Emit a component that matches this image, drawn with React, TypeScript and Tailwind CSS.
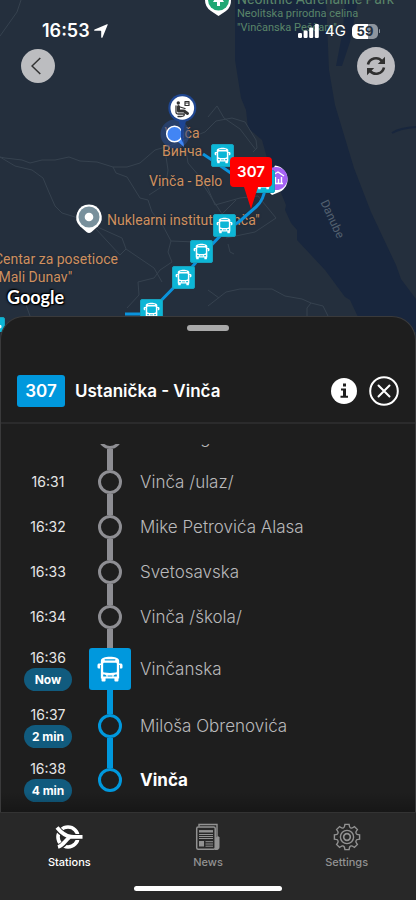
import React from "react";

/* ── Types ────────────────────────────────────────────────────────────────── */
type StopState = "passed" | "current" | "upcoming";
type Stop = { time: string; name: string; state: StopState; eta?: string; last?: boolean };
type Point = { x: number; y: number };

/* ── Data ─────────────────────────────────────────────────────────────────── */
const STOPS: Stop[] = [
  { time: "", name: "Beli Breg", state: "passed" },
  { time: "16:31", name: "Vinča /ulaz/", state: "passed" },
  { time: "16:32", name: "Mike Petrovića Alasa", state: "passed" },
  { time: "16:33", name: "Svetosavska", state: "passed" },
  { time: "16:34", name: "Vinča /škola/", state: "passed" },
  { time: "16:36", name: "Vinčanska", state: "current", eta: "Now" },
  { time: "16:37", name: "Miloša Obrenovića", state: "upcoming", eta: "2 min" },
  { time: "16:38", name: "Vinča", state: "upcoming", eta: "4 min", last: true },
];

const BUS_STOPS: Point[] = [
  { x: 211, y: 144 },
  { x: 252, y: 170 },
  { x: 213, y: 214 },
  { x: 190, y: 240 },
  { x: 172, y: 266 },
  { x: 140, y: 299 },
  { x: -18, y: 317 },
];

/* ── Icons ────────────────────────────────────────────────────────────────── */
function BusShape() {
  return (
    <>
      <path
        fillRule="evenodd"
        d="M4.500 5C4.500 2.300 9 .8 14 .8S23.500 2.300 23.500 5V23.400h-.7V25.500a1 1 0 0 1-1 1h-2.200a1 1 0 0 1-1-1v-2.100h-9.200v2.100a1 1 0 0 1-1 1H6.200a1 1 0 0 1-1-1v-2.100h-.7ZM9 3.300a.7.7 0 0 0 0 1.400h10a.7.7 0 0 0 0-1.400ZM8.200 7C7.400 7 6.900 7.500 6.900 8.300v7.500c0 .8.500 1.300 1.300 1.400 3.800.6 7.800.6 11.600 0 .8-.1 1.300-.6 1.300-1.400V8.300c0-.8-.5-1.300-1.300-1.300ZM6.900 19.200v2h3.500c0-1.300-1.300-2-3.500-2Zm14.200 0c-2.200 0-3.500.7-3.500 2h3.500ZM11.500 20.200v1h5v-1Z"
      />
      <path d="M5 7.800v1.600H3.700V13H2.300A1.300 1.300 0 0 1 1 11.700V9.600C1 8.500 1.800 7.800 2.900 7.800ZM23 7.800v1.600h1.300V13h1.400a1.300 1.300 0 0 0 1.300-1.300V9.600c0-1.100-.8-1.800-1.900-1.800Z" />
    </>
  );
}

function BusIcon({ className }: { className?: string }) {
  return (
    <svg viewBox="0 0 28 27" fill="currentColor" className={className} aria-hidden="true">
      <BusShape />
    </svg>
  );
}

function StationsIcon() {
  return (
    <svg viewBox="0 0 28 26" className="h-[26px] w-7" fill="none" stroke="currentColor" aria-hidden="true">
      <circle cx="13" cy="13" r="10" strokeWidth="3.600" />
      <path d="M1.500 3.500C6 9 10 12 16 12.800c4 .4 7 .2 11.500.2M2.500 23.500C8 22 10 18 15.500 13" stroke="#282828" strokeWidth="6" />
      <path d="M2 3.500C6 8.500 10 12 16 12.600c4 .4 7 .2 11.500.2M3 23C8.500 21.500 9.500 17 15 12.800" strokeWidth="3.800" />
    </svg>
  );
}

function NewsIcon() {
  return (
    <svg viewBox="0 0 26 28" className="h-7 w-[26px]" fill="none" stroke="currentColor" aria-hidden="true">
      <path d="M4 3.500V1.500h18v22" strokeWidth="1.400" />
      <path d="M22 14h2v10.500a2 2 0 0 1-2 2h-2V15" fill="currentColor" strokeWidth="1" />
      <rect x="1.700" y="4" width="18.500" height="22.300" rx="1.500" fill="#282828" strokeWidth="1.500" />
      <path d="M4 8.300h14" strokeWidth="2.400" />
      <path d="M4 11.500h14M4 13.500h14M4 15.500h14M10.500 18.700h7.500M10.500 21h7.500M10.500 23.200h7.500" strokeWidth="1" />
      <path d="M4 18h5v5.500H4Z" fill="currentColor" stroke="none" />
    </svg>
  );
}

function GearIcon() {
  // one tooth, repeated round the hub
  const angles = [0, 45, 90, 135, 180, 225, 270, 315];
  return (
    <svg viewBox="-14 -14 28 28" className="size-7" fill="none" stroke="currentColor" strokeWidth="1.400" aria-hidden="true">
      {angles.map((angle) => (
        <path
          key={angle}
          transform={`rotate(${angle})`}
          d="M-3.750-9Q-2.600-9.500-2.400-11L-2.100-12.600H2.100L2.400-11Q2.600-9.500 3.750-9"
        />
      ))}
      <circle r="6.600" />
      <circle r="3.300" strokeWidth="1.700" />
    </svg>
  );
}

function RefreshIcon() {
  return (
    <svg viewBox="0 0 20 20" className="size-5" fill="none" stroke="currentColor" strokeWidth="2.600" aria-hidden="true">
      <path d="M2 8.600A8 8 0 0 1 16 5.200M18 11.400A8 8 0 0 1 4 14.800" />
      <path d="M19 .8V8h-7.200ZM1 19.200V12h7.200Z" fill="currentColor" stroke="none" />
    </svg>
  );
}

/* ── Map ──────────────────────────────────────────────────────────────────── */
function Terrain() {
  return (
    <svg viewBox="0 0 416 334" className="absolute top-0 left-0 h-[334px] w-[416px]" fill="none" aria-hidden="true">
      <path
        d="M235 0V60L241 98 246 110 248 128 262 140 267 158 279 188 286 205 285 210 291 223 297 230V240L325 270 345 297 350 300 366 334H416V299L401 279 396 265 371 212 354 168 335 105 329 70 326 0Z"
        fill="#18263d"
      />
      <path d="M345 0 343 30 336 66H342L350 42 358 0Z" fill="#18263d" />
      <path d="M392 133Q400 128 416 127" stroke="#18263d" strokeWidth="2" />
      <g stroke="#36424f" strokeWidth="1">
        <path d="M21 0 17 12 0 36M0 157 5 158 22 160 30 163 42 160 55 160 69 157 80 161 97 162 113 167H127L140 163 155 150 172 145 205 132 216 121 232 118 245 122 256 140 257 148 253 152M208 117 217 106 224 118 240 129 256 150" />
        <path d="M0 157 15 166 32 170 43 178 48 190 55 206 62 213 75 217 93 225 122 238 126 249 154 268 162 282M96 229 120 255 126 249M113 167 116 173 127 177 140 198 148 200 152 212 163 226 171 241" />
        <path d="M165 150 168 170 166 184 149 195M186 150 188 163 206 184 215 205 240 198 258 196 276 218 255 232 226 238M228 244 230 252 234 254M171 241 168 252 172 262 160 270 154 278 138 282 139 295 127 308" />
        <path d="M208 306 226 292 240 289H272L285 296 302 299 311 303 323 306 328 316M311 303 307 308V316M208 290 219 298M15 294 25 302 30 316M171 241 195 242M200 180 222 214 236 200" />
      </g>
    </svg>
  );
}

const labelClass =
  "absolute whitespace-nowrap font-[Roboto,sans-serif] text-sm leading-[18px] text-[#cf905f] [text-shadow:0_0_2px_#1b2430]";

function MapLabels() {
  return (
    <>
      <span className="absolute top-[-10px] left-[237px] font-[Roboto,sans-serif] text-sm leading-[18px] whitespace-nowrap text-[#5a8569]">
        Neolithic Adrenaline Park
      </span>
      <span className="absolute top-[7px] left-[237px] font-[Roboto,sans-serif] text-[11px] leading-[14px] whitespace-nowrap text-[#5a8569]">
        Neolitska prirodna celina
        <br />
        "Vinčanska Peščara"
      </span>
      <span className={`${labelClass} top-[124px] left-[162px] text-center`}>
        Vinča
        <br />
        Винча
      </span>
      <span className={`${labelClass} top-[172px] left-[149px]`}>Vinča - Belo</span>
      <span className={`${labelClass} top-[211px] left-[107px]`}>Nuklearni institut "Vinča"</span>
      <span className={`${labelClass} top-[250px] left-[-6px]`}>
        Centar za posetioce
        <br />
        "Mali Dunav"
      </span>
      <span className="absolute top-[211px] left-[312px] rotate-[65deg] font-[Roboto,sans-serif] text-xs leading-4 text-[#53606f]">
        Danube
      </span>
      <span className="absolute top-[286px] left-[7px] font-[Lato,sans-serif] text-lg leading-[22px] font-bold text-white [text-shadow:0_0_2px_#000,0_0_3px_#000,1px_1px_1px_#000,-1px_-1px_1px_#000]">
        Google
      </span>
    </>
  );
}

function MapPins() {
  return (
    <svg viewBox="0 0 416 334" className="absolute top-0 left-0 h-[334px] w-[416px]" aria-hidden="true">
      <path
        d="M203 154 212 160 238 178M265 188Q264 200 256 207L240 221 224 232 202 255 183 278 151 311 140 314H125"
        fill="none"
        stroke="#0a93dc"
        strokeWidth="3"
      />

      {/* nature park */}
      <path d="M205 0a13 13 0 0 0 6 11l7.500 5 7.500-5a13 13 0 0 0 5-11Z" fill="#fff" />
      <path d="M208 0a10.500 10.500 0 0 0 21 0Z" fill="#1fa873" />
      <path d="M213 2 218.500-7 224 2ZM217 1h3v5h-3Z" fill="#fff" />

      {/* museum */}
      <path d="M275 165.500a14 14 0 0 1 2 27.500l-5 2-8-8Z" fill="#fff" />
      <circle cx="276" cy="178.500" r="11.500" fill="#a462f5" />
      <g fill="none" stroke="#fff" strokeWidth="1.400">
        <path d="m271 176 7-4 6 4M272 183.500h11M275.500 177v6M281.500 177v6" />
        <path d="M278.500 179v4" />
      </g>

      {/* institute */}
      <path d="M89 204.500a12.800 12.800 0 0 1 9 21.800L91.500 232a4 4 0 0 1-5 0L80 226.300a12.800 12.800 0 0 1 9-21.800Z" fill="#fff" />
      <circle cx="89" cy="217" r="10.500" fill="#78909c" />
      <circle cx="89" cy="217" r="4.300" fill="#fff" />

      {BUS_STOPS.map((stop) => (
        <g key={`${stop.x}-${stop.y}`} transform={`translate(${stop.x} ${stop.y})`}>
          <rect x=".5" y=".5" width="22" height="22" rx="1.500" fill="#0cb6d6" stroke="#17a1bd" />
          <g transform="translate(3 3.200) scale(.61)" fill="#fff">
            <BusShape />
          </g>
        </g>
      ))}

      {/* own position and the chosen station */}
      <circle cx="175" cy="134" r="14.500" fill="#2c4e8f" fillOpacity=".55" />
      <path d="M176 140 184 147 183 138Z" fill="#3f86f5" />
      <circle cx="174.500" cy="134" r="7.800" fill="#4285f4" stroke="#fff" strokeWidth="1.500" />
      <path d="M178 118h9l-3 10-.5 16-2.500-6V130Z" fill="#1d4594" />
      <circle cx="182.300" cy="108" r="14" fill="#1f4690" />
      <circle cx="182.300" cy="108" r="11.800" fill="#fff" />
      <g stroke="#333" fill="none" strokeLinecap="round" strokeLinejoin="round">
        <path d="M178.500 106.500v4.500h5.500l3.500 2.500" strokeWidth="3" />
        <path d="M176 106v6.500q0 1.500 2 1.500h6.500M184 114q1 2.500-3 2.500h-3M180 107l5 1.500" strokeWidth="1.300" />
        <path d="M185 101.500h4v4h-4ZM186 103h2" strokeWidth="1.200" />
      </g>
      <circle cx="178.300" cy="103" r="1.700" fill="#333" />

      {/* vehicle */}
      <path d="M234 157h34a4 4 0 0 1 4 4v22a4 4 0 0 1-4 4h-10l-7 22-7-22h-10a4 4 0 0 1-4-4v-22a4 4 0 0 1 4-4Z" fill="#fe0000" />
    </svg>
  );
}

function StatusBar() {
  return (
    <div className="flex h-[42px] items-end justify-between pr-9 pl-[42px] text-white">
      <div className="flex items-center gap-1">
        <span className="text-lg leading-[22px] font-semibold">16:53</span>
        <svg viewBox="0 0 14 14" className="size-[14px]" fill="currentColor" aria-hidden="true">
          <path d="M13.700.8 8.500 13.400c-.3.700-1.300.6-1.300-.2V7.400a.6.6 0 0 0-.6-.6H.9C0 6.800-.1 5.800.6 5.500L13 .2c.5-.2.9.1.7.6Z" />
        </svg>
      </div>
      <div className="flex h-[22px] items-center gap-[6px]">
        <svg viewBox="0 0 21 14" className="h-[14px] w-[21px]" fill="currentColor" aria-hidden="true">
          <rect y="9" width="4" height="5" rx="1.200" />
          <rect x="5.600" y="6.500" width="4" height="7.500" rx="1.200" />
          <rect x="11.200" y="3.500" width="4" height="10.500" rx="1.200" />
          <rect x="16.800" width="4" height="14" rx="1.200" />
        </svg>
        <span className="text-[15px] leading-[22px]">4G</span>
        <div className="flex items-center gap-px">
          <span className="h-[15px] w-[26px] rounded-[5px] bg-linear-to-r from-white from-60% to-[#8e959e] to-60% text-center text-[13px] leading-[15px] font-bold text-[#25303e]">
            59
          </span>
          <span className="h-1 w-px rounded-full bg-[#8e959e]" />
        </div>
      </div>
    </div>
  );
}

function MapView() {
  return (
    <section className="relative h-[332px] shrink-0 overflow-hidden bg-[#242f3d]" aria-label="Map">
      {/* free canvas for terrain, labels and pins */}
      <div className="absolute top-0 left-1/2 h-full w-[416px] -translate-x-1/2">
        <Terrain />
        <MapLabels />
        <MapPins />
        <span className="absolute top-[162px] left-[230px] w-[42px] text-center text-[15px] leading-5 font-semibold text-white">
          307
        </span>
      </div>

      <div className="relative">
        <StatusBar />
        <div className="flex items-center justify-between px-[21px] pt-[5px]">
          <button
            type="button"
            aria-label="Back"
            className="flex size-[34px] items-center justify-center rounded-full bg-[#bcbdc0] text-[#333]"
          >
            <svg viewBox="0 0 10 18" className="mr-1 h-[18px] w-[10px]" fill="none" stroke="currentColor" strokeWidth="1.500" aria-hidden="true">
              <path d="M9.300 1 1 9l8.300 8" />
            </svg>
          </button>
          <button
            type="button"
            aria-label="Refresh"
            className="flex size-[38px] items-center justify-center rounded-full bg-[#bcbcc0] text-[#303030]"
          >
            <RefreshIcon />
          </button>
        </div>
      </div>
    </section>
  );
}

/* ── Stop list ────────────────────────────────────────────────────────────── */
function StopRow({ stop }: { stop: Stop }) {
  const isPassed = stop.state === "passed";
  const isCurrent = stop.state === "current";
  const height = isPassed ? "h-[45px]" : isCurrent ? "h-[60px]" : "h-[54px]";
  const lineAbove = isPassed || isCurrent ? "bg-[#8e8e93]" : "bg-[#0098dd]";
  const lineBelow = stop.last ? "" : isPassed ? "bg-[#8e8e93]" : "bg-[#0098dd]";

  return (
    <li className={`flex shrink-0 items-center ${height}`}>
      <div className="flex w-20 flex-col items-center">
        <time className="text-sm leading-5 text-[#e6e6e6]">{stop.time}</time>
        {stop.eta && (
          <span className="w-12 rounded-full bg-[#115b7e] text-center text-xs leading-[23px] font-bold text-white">
            {stop.eta}
          </span>
        )}
      </div>
      <div className="flex w-11 flex-col items-center self-stretch">
        <span className={`w-[6px] flex-1 ${lineAbove}`} />
        {isCurrent ? (
          <span className="flex size-[42px] items-center justify-center rounded-[3px] bg-[#0098dd] text-white">
            <BusIcon className="h-[26px] w-7" />
          </span>
        ) : (
          <span className={`size-6 rounded-full border-3 ${isPassed ? "border-[#8e8e93]" : "border-[#0098dd]"}`} />
        )}
        <span className={`w-[6px] flex-1 ${lineBelow}`} />
      </div>
      <span
        className={`pl-2 text-[17px] leading-6 ${
          stop.last ? "font-bold text-white" : "font-light text-[#b9b9bb]"
        }`}
      >
        {stop.name}
      </span>
    </li>
  );
}

function LineSheet() {
  return (
    <section className="relative -mt-4 flex min-h-0 flex-1 flex-col overflow-hidden rounded-t-3xl border border-b-0 border-[#3a3a3b] bg-[#1e1e1e]">
      <div className="mx-auto mt-2 h-[6px] w-[42px] shrink-0 rounded-full bg-[#a9a9a9]" />
      <header className="flex shrink-0 items-center border-b-2 border-[#2b2b2c] px-4 pt-11 pb-[15px]">
        <span className="w-12 rounded-[3px] bg-[#0098dd] text-center text-[17px] leading-8 font-semibold text-white">
          307
        </span>
        <h1 className="flex-1 pl-[10px] text-[17px] leading-6 font-semibold text-white">Ustanička - Vinča</h1>
        <button type="button" aria-label="Line information" className="mr-3 text-white">
          <svg viewBox="0 0 26 26" className="size-[26px]" aria-hidden="true">
            <circle cx="13" cy="13" r="13" fill="currentColor" />
            <path d="M12 5.500h3v3h-3ZM10 10.500h5v7.200h2v2h-7.500v-2H12v-5.200h-2Z" fill="#1e1e1e" />
          </svg>
        </button>
        <button type="button" aria-label="Close" className="text-white">
          <svg viewBox="0 0 30 30" className="size-[30px]" fill="none" stroke="currentColor" strokeWidth="2" aria-hidden="true">
            <circle cx="15" cy="15" r="13.800" />
            <path d="m9.500 9.500 11 11m0-11-11 11" strokeLinecap="round" />
          </svg>
        </button>
      </header>
      <div className="mt-5 min-h-0 flex-1 overflow-hidden">
        <ul className="-mt-[30px] flex flex-col pl-[7px]">
          {STOPS.map((stop) => (
            <StopRow key={stop.name} stop={stop} />
          ))}
        </ul>
      </div>
      <div className="pointer-events-none absolute inset-x-0 bottom-0 h-5 bg-linear-to-b from-transparent to-black/25" />
    </section>
  );
}

/* ── Tab bar ──────────────────────────────────────────────────────────────── */
function TabBar() {
  const tabs = [
    { label: "Stations", icon: <StationsIcon />, active: true },
    { label: "News", icon: <NewsIcon />, active: false },
    { label: "Settings", icon: <GearIcon />, active: false },
  ];

  return (
    <nav className="shrink-0 border-t border-[#333] bg-[#282828] pb-[9px]">
      <div className="flex">
        {tabs.map((tab) => (
          <a
            key={tab.label}
            href="#"
            className={`flex flex-1 flex-col items-center pt-[10px] ${tab.active ? "text-white" : "text-[#929292]"}`}
          >
            <span className="flex h-7 items-center">{tab.icon}</span>
            <span className="mt-[3px] text-[11px] leading-4 font-medium">{tab.label}</span>
          </a>
        ))}
      </div>
      <div className="mx-auto mt-4 h-[5px] w-[148px] rounded-full bg-white" />
    </nav>
  );
}

/* ── Page ─────────────────────────────────────────────────────────────────── */
export default function App() {
  return (
    <main className="flex h-screen flex-col overflow-hidden bg-[#242f3d] font-[Inter,sans-serif]">
      <MapView />
      <LineSheet />
      <TabBar />
    </main>
  );
}
